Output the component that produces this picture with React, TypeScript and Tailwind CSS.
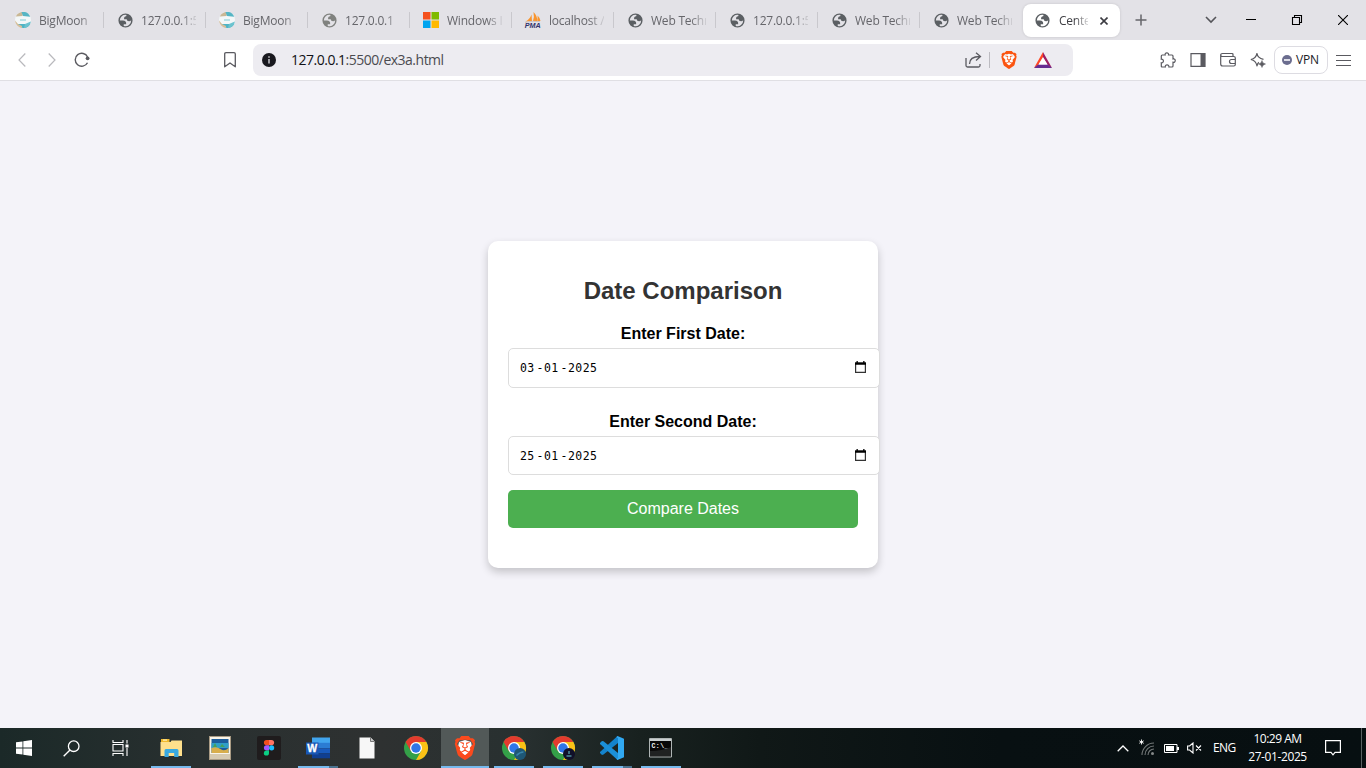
import React from "react";
import { SiBrave } from "react-icons/si";

const Globe = ({ light = false }: { light?: boolean }) => (
  <svg viewBox="0 0 24 24" className={light ? "size-[17px] shrink-0 text-[#80827f]" : "size-[17px] shrink-0 text-[#5b5f63]"}>
    <path
      fill="currentColor"
      fillRule="evenodd"
      d="M12 2a10 10 0 1 1 0 20a10 10 0 0 1 0-20zM4 12h4.4c3.407.022 4.922 1.73 4.543 5.127H9.488v2.47a8.004 8.004 0 0 0 10.498-8.083C19.327 12.504 18.332 13 17 13c-2.137 0-3.206-.916-3.206-2.75h-3.748c-.274-2.728.683-4.092 2.87-4.092 0-.975.327-1.597.811-1.97A8.004 8.004 0 0 0 4 12z"
    />
  </svg>
);

const Moon = () => (
  <svg viewBox="0 0 16 16" className="size-4 shrink-0">
    <circle cx="8" cy="8" r="8" fill="#f3f7f8" />
    <path d="M.8 4.500A8 8 0 0 1 8 0l-.5 4z" fill="#c9b795" />
    <path d="M6.500 0a8 8 0 0 1 8.700 4.700L8 4z" fill="#55b5c4" />
    <path d="M5 8h6" stroke="#7fcbd4" strokeWidth="1" />
    <path d="M2 12h13.200a8 8 0 0 1-7.200 4a8 8 0 0 1-6-4z" fill="#4eb4c5" />
    <path d="M0 8.500l3 3.500 4 2v2A8 8 0 0 1 0 8.500z" fill="#d5bd99" />
    <path d="M10 12l5.900-2.500A8 8 0 0 1 9 16z" fill="#6cc3cf" />
  </svg>
);

const Microsoft = () => (
  <svg viewBox="0 0 16 16" className="size-4 shrink-0">
    <path fill="#f4511e" d="M0 0h7.5v7.5H0z" />
    <path fill="#7fba00" d="M8.5 0H16v7.5H8.5z" />
    <path fill="#00a4ef" d="M0 8.5h7.5V16H0z" />
    <path fill="#ffb900" d="M8.5 8.5H16V16H8.5z" />
  </svg>
);

const Pma = () => (
  <svg viewBox="0 0 16 16" className="size-4 shrink-0 overflow-visible">
    <path d="M.5 9.500Q5 7 6.500 2.500L7 9zM8 9Q9.500 5 8.500 0Q12.500 4 12.300 9zM12.600 9V3.500q2.200 2 2.900 5.500z" fill="#f9952f" />
    <path d="M0 10.300q8-1.800 15-.6" stroke="#c1b9bd" strokeWidth=".8" fill="none" />
    <text x="-.3" y="15.600" fontSize="7" fontWeight="bold" fontStyle="italic" fill="#33336b" textLength="16" lengthAdjust="spacingAndGlyphs" fontFamily="Liberation Sans">PMA</text>
  </svg>
);

const Chrome = ({ children }: { children?: React.ReactNode }) => (
  <svg viewBox="0 0 48 48" className="size-6 overflow-visible">
    <circle cx="24" cy="24" r="24" fill="#34a048" />
    <path d="M24 12h20.8A24 24 0 0 1 24 48l10.4-18z" fill="#fbc116" />
    <path d="M3.2 12A24 24 0 0 1 44.8 12H24L13.6 30z" fill="#e33b2e" />
    <circle cx="24" cy="24" r="12" fill="#fff" />
    <circle cx="24" cy="24" r="9.5" fill="#2f76e8" />
    {children}
  </svg>
);

const Brave = ({ big = false }: { big?: boolean }) => (
  <span className={big ? "grid size-6 place-items-center" : "grid size-[18px] place-items-center"}>
    <svg viewBox="0 0 24 24" className={big ? "col-start-1 row-start-1 size-6" : "col-start-1 row-start-1 size-[18px]"}>
      <path d="M6 6l6-2 6 2 1 5-3 7-4 3-4-3-3-7z" fill="#fff" />
    </svg>
    <SiBrave className={big ? "col-start-1 row-start-1 size-6 text-[#fb4a1d]" : "col-start-1 row-start-1 size-[18px] text-[#fb5410]"} />
  </span>
);

const tabs = [
  { icon: <Moon />, label: "BigMoon" },
  { icon: <Globe />, label: "127.0.0.1:5" },
  { icon: <Moon />, label: "BigMoon" },
  { icon: <Globe light />, label: "127.0.0.1" },
  { icon: <Microsoft />, label: "Windows I" },
  { icon: <Pma />, label: "localhost /" },
  { icon: <Globe />, label: "Web Techn" },
  { icon: <Globe />, label: "127.0.0.1:5" },
  { icon: <Globe />, label: "Web Techn" },
  { icon: <Globe />, label: "Web Techn" },
];

const ui = "font-['Open_Sans','Noto_Sans',sans-serif]";

function TabStrip() {
  return (
    <div className="flex h-10 shrink-0 bg-[#e3e2e7]">
      <div className="flex w-[1022px] shrink-0 items-center pl-0.5">
        {tabs.map((t, i) => (
          <div key={i} className="flex h-[41px] w-[102px] shrink-0 items-center pl-[13px]">
            <span className="grid w-4 shrink-0 place-items-center">{t.icon}</span>
            <span className="mt-[2px] ml-2 w-[55px] overflow-hidden text-[12px] tracking-[-0.22px] whitespace-nowrap text-[#66666b] [mask-image:linear-gradient(to_right,black_72%,transparent_105%)]">
              {t.label}
            </span>
            <span className={i < 9 ? "ml-auto h-4 w-px bg-[#c9c8cd]" : "hidden"} />
          </div>
        ))}
      </div>
      <div className="mt-1 ml-px flex h-[33px] w-[97px] shrink-0 items-center rounded-lg bg-white pl-[11px] shadow-[0_0_3px_#00000022]">
        <Globe />
        <span className="mt-px ml-2 w-[29px] overflow-hidden text-[12px] tracking-[-0.22px] whitespace-nowrap text-[#3f3f44] [mask-image:linear-gradient(to_right,black_55%,transparent_110%)]">
          Cente
        </span>
        <svg viewBox="0 0 8 8" className="ml-[12px] size-2 text-[#3c3c42]">
          <path d="M.5.5l7 7M7.5.5l-7 7" stroke="currentColor" strokeWidth="1.6" />
        </svg>
      </div>
      <div className="flex flex-1 items-center">
        <svg viewBox="0 0 12 12" className="ml-[15px] size-3">
          <path d="M6 .5v11M.5 6h11" stroke="#66666b" strokeWidth="1.5" />
        </svg>
        <svg viewBox="0 0 12 8" className="ml-[58px] h-2 w-3">
          <path d="M1 1l5 5 5-5" stroke="#55555a" strokeWidth="1.6" fill="none" />
        </svg>
        <svg viewBox="0 0 10 10" className="ml-[29px] size-2.5">
          <path d="M0 4.5h10" stroke="#000" />
        </svg>
        <svg viewBox="0 0 10 10" className="ml-9 size-2.5 overflow-visible">
          <path d="M.5 2.5h7v7h-7zM2.5 2.5v-2h7v7h-2" stroke="#000" fill="none" strokeWidth="1.1" />
        </svg>
        <svg viewBox="0 0 10 10" className="ml-9 size-2.5">
          <path d="M0 0l10 10M10 0L0 10" stroke="#000" strokeWidth="1.1" />
        </svg>
      </div>
    </div>
  );
}

function Toolbar() {
  return (
    <div className="flex h-[41px] shrink-0 items-center border-b border-[#e0dfe4] bg-white text-[#5a5a60]">
      <svg viewBox="0 0 8 14" className="ml-[18px] h-3.5 w-2">
        <path d="M7.3.5L1 7l6.3 6.5" stroke="#b9b9bd" strokeWidth="1.2" fill="none" />
      </svg>
      <svg viewBox="0 0 8 14" className="ml-[22px] h-3.5 w-2">
        <path d="M.7.5L7 7L.7 13.500" stroke="#b9b9bd" strokeWidth="1.2" fill="none" />
      </svg>
      <svg viewBox="0 0 16 16" className="ml-[18px] size-4">
        <path d="M13.600 5A6.500 6.500 0 1 0 13.500 10.800" stroke="currentColor" strokeWidth="1.4" fill="none" />
        <circle cx="13.600" cy="6.300" r="1.900" fill="currentColor" />
      </svg>
      <svg viewBox="0 0 12 16" className="ml-[134px] h-4 w-3">
        <path d="M.7 2Q.7.7 2 .7h8Q11.300.7 11.300 2v12.800L6 11 .7 14.800z" stroke="currentColor" strokeWidth="1.3" fill="none" strokeLinejoin="round" />
      </svg>
      <div className="ml-[17px] flex h-8 w-[820px] shrink-0 items-center rounded-lg bg-[#edecf1]">
        <svg viewBox="0 0 14 14" className="ml-[9px] size-3.5">
          <circle cx="7" cy="7" r="7" fill="#19191f" />
          <path d="M7 6v4.500M7 3.200v1.500" stroke="#d5d5d9" strokeWidth="1.400" />
        </svg>
        <span className="ml-[15px] pb-px text-[14px] tracking-[-0.5px] whitespace-nowrap text-[#4b4b50]">
          <span className="text-[#111116]">127.0.0.1</span>:5500/ex3a.html
        </span>
        <svg viewBox="0 0 17 16" className="ml-auto h-4 w-[17px]">
          <path d="M1 6v7.500q0 1.500 1.500 1.500h11q1.500 0 1.500-1.500V12M4.500 12Q4.500 4.500 15 4.500M11 .7L15.500 4.500l-4.500 4" stroke="currentColor" strokeWidth="1.300" fill="none" />
        </svg>
        <span className="ml-[7px] h-4 w-px bg-[#bcbbc1]" />
        <span className="ml-[10px]"><Brave /></span>
        <svg viewBox="0 0 18 16" className="ml-4 h-4 w-[18px]">
          <path d="M9 0L0 16l4-2.500L9 5z" fill="#ff4724" />
          <path d="M9 0l9 16-4-2.500L9 5z" fill="#9e1f63" />
          <path d="M0 16h18l-4.200-3.500H4.200z" fill="#662d91" />
          <path d="M9 5.500l4.500 7h-9z" fill="#fff" />
        </svg>
        <span className="w-[21px]" />
      </div>
      <svg viewBox="0 0 16 16" className="ml-[87px] size-4">
        <path d="M1.300 4Q1.300 3 2.300 3h2.900C4.300.2 9.300.2 8.500 3H12q1 0 1 1v3c3-.8 3 4 0 3.200V14q0 1-1 1H8.900c.5-2.800-4.200-2.800-3.600 0h-3q-1 0-1-1v-3.200c2.800.4 2.800-4 0-3.600z" stroke="currentColor" strokeWidth="1.200" fill="none" />
      </svg>
      <svg viewBox="0 0 16 16" className="ml-[14px] size-4">
        <path d="M1 1.600h14v12.800H1z" stroke="currentColor" strokeWidth="1.200" fill="none" />
        <path d="M10.500 1.500H15v13h-4.500z" fill="currentColor" />
      </svg>
      <svg viewBox="0 0 16 16" className="ml-[14px] size-4">
        <path d="M13 4.500V2.500q0-1-1-1H2.500Q.7 1.500.7 3t1.800 1.500h11.300q1.500 0 1.500 1.500v6.500q0 1.500-1.500 1.500H2.700Q.7 14 .7 12V3M15 7.500h-3.500a2 2 0 0 0 0 4H15" stroke="currentColor" strokeWidth="1.200" fill="none" />
      </svg>
      <svg viewBox="0 0 16 16" className="ml-[14px] size-4">
        <path d="M7 1.200Q7.400 6 13.500 7.300M.8 7.500Q6 6.800 7 1.200M.8 7.500Q6 8.500 7 14Q7.400 11.500 8.800 10.200" stroke="currentColor" strokeWidth="1.200" fill="none" strokeLinejoin="round" />
        <path d="M12 8.500q.3 3 3.500 3.500q-3 .5-3.500 3.500q-.5-3-3.500-3.500q3-.5 3.500-3.500z" fill="currentColor" stroke="currentColor" strokeWidth=".5" />
      </svg>
      <div className="ml-2 flex h-[28px] w-[54px] items-center rounded-lg border border-[#dddce2] pl-[7px]">
        <span className="flex size-2.5 items-center justify-center rounded-full bg-[#6b6d8f]"><span className="h-0.5 w-1.5 bg-[#dddde7]" /></span>
        <span className="ml-1 text-[12px] tracking-[-0.2px] text-[#202026]">VPN</span>
      </div>
      <svg viewBox="0 0 15 13" className="ml-2 h-[13px] w-[15px]">
        <path d="M0 1.500h15M0 6.500h15M0 11.500h15" stroke="currentColor" strokeWidth="1.200" />
      </svg>
    </div>
  );
}

const DateBox = ({ day, tall = false }: { day: string; tall?: boolean }) => (
  <div className={(tall ? "h-10" : "h-[39px]") + " flex w-[372px] items-center rounded-[5px] border border-[#ddd] bg-white pr-[13px] pl-[11px] font-['DejaVu_Sans_Mono',monospace] text-[11.5px] text-black"}>
    <div className="flex pt-[2px]">
      <span className="w-4 tracking-[0.4px]">{day}</span>
      <span className="w-2 text-center">-</span>
      <span className="w-4 tracking-[0.4px]">01</span>
      <span className="w-2 text-center">-</span>
      <span className="tracking-[0.4px]">2025</span>
    </div>
    <svg viewBox="0 0 11 12" className={(tall ? "mb-[2px]" : "mb-px") + " ml-auto h-3 w-[11px]"}>
      <path d="M.6 2h9.800v9.400H.6z" fill="none" stroke="#333" strokeWidth="1.200" />
      <path d="M0 1.500h11v2.200H0zM1.500 0h1.300v2H1.500zM8.200 0h1.300v2H8.200z" fill="#000" />
    </svg>
  </div>
);

function Page() {
  return (
    <main className="flex flex-1 items-center justify-center bg-[#f4f3f9] font-['Liberation_Sans',Arial,sans-serif]">
      <div className="flex h-[327px] w-[390px] flex-col rounded-[10px] bg-white px-5 pt-9 shadow-[0_4px_8px_rgba(0,0,0,0.2)]">
        <h2 className="text-center text-[24px] leading-7 font-bold text-[#333]">Date Comparison</h2>
        <p className="mt-5 mb-[5px] text-center text-[16px] leading-[18px] font-bold text-black">Enter First Date:</p>
        <DateBox day="03" tall />
        <p className="mt-[25px] mb-[5px] text-center text-[16px] leading-[18px] font-bold text-black">Enter Second Date:</p>
        <DateBox day="25" />
        <button className="mt-[15px] h-[38px] rounded-[5px] bg-[#4caf50] pb-px text-[16px] text-white">Compare Dates</button>
      </div>
    </main>
  );
}

const Explorer = () => (
  <svg viewBox="0 0 24 24" className="size-6">
    <path d="M2 3h8.500v3H23v4H2z" fill="#f0b92d" />
    <path d="M4 3.500h4v1.200H4z" fill="#fff4c4" />
    <path d="M1.500 6h10l1-1.500H23V20H1.500z" fill="#ffe08c" />
    <path d="M5.500 21v-6.500q0-1.500 1.500-1.500h11q1.500 0 1.500 1.500V21h-4.300v-4H9.700v4z" fill="#39a9e0" />
  </svg>
);
const Photo = () => (
  <svg viewBox="0 0 22 24" className="h-6 w-[22px]">
    <path d="M0 0h22v24H0z" fill="#a99b84" />
    <path d="M1 1h20v22H1z" fill="#d6cab0" />
    <path d="M1 1h20v17H1z" fill="#f8f4e9" />
    <path d="M2.500 3h17v14h-17z" fill="#1c5d9c" />
    <path d="M2.500 7h17v5h-17z" fill="#2f9fc8" />
    <path d="M2.500 12q5-2 9 1t8-1v5h-17z" fill="#d8ae4b" />
    <path d="M4 11l2-4 2 4zM11 11l2-3 3 3z" fill="#45a05a" />
  </svg>
);
const Figma = () => (
  <svg viewBox="0 0 24 24" className="size-6">
    <rect width="24" height="24" rx="2" fill="#1f1c1d" />
    <path d="M9.500 4H12v5.200H9.500a2.600 2.600 0 0 1 0-5.200z" fill="#f24e1e" />
    <path d="M12 4h2.500a2.600 2.600 0 0 1 0 5.200H12z" fill="#ff7262" />
    <path d="M9.500 9.200H12v5.200H9.500a2.600 2.600 0 0 1 0-5.200z" fill="#a259ff" />
    <circle cx="14.600" cy="11.800" r="2.600" fill="#1abcfe" />
    <path d="M9.500 14.400H12V17a2.600 2.600 0 1 1-2.500-2.600z" fill="#0acf83" />
  </svg>
);
const Word = () => (
  <svg viewBox="0 0 24 24" className="size-6">
    <path d="M6 1.500h18V7H6z" fill="#41a5ee" />
    <path d="M6 6.800h18v5.500H6z" fill="#2b7cd3" />
    <path d="M6 12.300h18v5H6z" fill="#185abd" />
    <path d="M6 17.300h18v5H6z" fill="#103f91" />
    <path d="M0 6.500h12.500v12H0z" fill="#1957b5" />
    <text x="1.200" y="16.200" fontSize="10.500" fontWeight="bold" fill="#fff" stroke="#fff" strokeWidth=".3" fontFamily="Liberation Sans">W</text>
  </svg>
);
const FileIcon = () => (
  <svg viewBox="0 0 16 22" className="h-[22px] w-4">
    <path d="M.5.500h11l4 4v17H.5z" fill="#f7f7f7" />
    <path d="M11.500.500v4h4" fill="#ccc" stroke="#777" />
  </svg>
);
const VsCode = () => (
  <svg viewBox="0 0 24 24" className="size-6">
    <path d="M18 0v7L3.500 18.500 2 19 0 17v-1L17 .5z" fill="#1483cc" />
    <path d="M0 8V7l2-2 1.500.3L18 17v7l-1-.5z" fill="#1b8fd8" />
    <path d="M17.500 0L24 2.700v18.600L17.500 24l-1-1.200L18 22V2l-1.500-.8z" fill="#31a9f2" />
  </svg>
);
const Cmd = () => (
  <svg viewBox="0 0 23 20" className="mr-px h-5 w-[23px]">
    <path d="M.5.500h22v18.500H.5z" fill="#080808" stroke="#aeb4b4" />
    <path d="M1 1h21v2H1z" fill="#c9cfd0" />
    <text x="2.500" y="9.500" fontSize="6.500" fontWeight="bold" fill="#f4f4f4" textLength="17" fontFamily="Liberation Mono">C:\_</text>
    <path d="M1 18V13q12 0 21-4v9z" fill="#202222" />
  </svg>
);

const apps = [
  { icon: <Explorer />, mode: "run" },
  { icon: <Photo />, mode: "" },
  { icon: <Figma />, mode: "" },
  { icon: <Word />, mode: "multi" },
  { icon: <FileIcon />, mode: "" },
  { icon: <Chrome />, mode: "" },
  { icon: <Brave big />, mode: "active" },
  { icon: <Chrome><circle cx="36" cy="36" r="12" fill="#1e5776" /><path d="M29 39q7-7 14-7" stroke="#3985ac" strokeWidth="3" fill="none" /></Chrome>, mode: "run" },
  { icon: <Chrome><circle cx="36" cy="36" r="12" fill="#111029" /><path d="M36 30v6M31 40h10" stroke="#4b8d9b" strokeWidth="3" /></Chrome>, mode: "run" },
  { icon: <VsCode />, mode: "multi" },
  { icon: <Cmd />, mode: "run" },
];

function Taskbar() {
  return (
    <div className="flex h-10 shrink-0 bg-[linear-gradient(90deg,#1b2928_0,#293030_200px,#2e3131_380px,#283030_520px,#18211f_640px,#101817_760px,#081012_1000px,#070f11_100%)] text-white">
      <div className="flex w-12 items-center justify-center">
        <svg viewBox="0 0 16 16" className="size-4">
          <path d="M0 2.300l6.500-.9v6.100H0zM7.300 1.300L16 0v7.500H7.300zM0 8.400h6.500v6.200L0 13.700zM7.300 8.400H16V16l-8.700-1.300z" fill="#fff" />
        </svg>
      </div>
      <div className="flex w-12 items-center justify-center pr-px">
        <svg viewBox="0 0 17 17" className="size-[17px]">
          <circle cx="10.700" cy="6.200" r="5.300" stroke="#fff" strokeWidth="1.300" fill="none" />
          <path d="M7 10L.7 16.300" stroke="#fff" strokeWidth="1.400" />
        </svg>
      </div>
      <div className="flex w-12 items-center justify-center">
        <svg viewBox="0 0 17 16" className="h-4 w-[17px]">
          <path d="M1 0v2.500h10V0M1 16v-2.500h10V16M1 4.500h10v6.500H1zM15 0v3.500M15 8v8" stroke="#fff" strokeWidth="1.100" fill="none" />
          <path d="M13.500 4.500h3v3h-3z" fill="#fff" />
        </svg>
      </div>
      <div className="ml-[3px] flex gap-px">
        {apps.map((a, i) => (
          <div key={i} className={(a.mode === "active" ? "bg-[#525958]" : "") + " flex w-12 flex-col items-center"}>
            <div className="flex h-[38px] items-center pt-0.5">{a.icon}</div>
            <div className={a.mode === "active" ? "h-0.5 w-12 bg-[#76b9ed]" : a.mode === "multi" ? "h-0.5 w-10 bg-[linear-gradient(90deg,#76b9ed_31px,#4b7390_31px)]" : a.mode === "run" ? "h-0.5 w-10 bg-[#76b9ed]" : "h-0.5 w-10"} />
          </div>
        ))}
      </div>
      <div className="ml-auto flex items-center text-[12px]">
        <svg viewBox="0 0 12 7" className="h-[7px] w-3">
          <path d="M.7 6.300L6 1l5.300 5.300" stroke="#fff" strokeWidth="1.300" fill="none" />
        </svg>
        <svg viewBox="0 0 16 16" className="ml-2.5 size-4 overflow-visible">
          <path d="M2.500-.5v5M.3.800l4.400 2.500M4.700.800L.3 3.300" stroke="#fff" strokeWidth=".9" />
          <path d="M3 15A12 12 0 0 1 15 3M6 15a9 9 0 0 1 9-9M9 15a6 6 0 0 1 6-6" stroke="#737878" strokeWidth="1.100" fill="none" />
          <circle cx="13.500" cy="13.500" r="1.500" fill="#858989" />
        </svg>
        <svg viewBox="0 0 15 9" className="ml-[9px] h-[9px] w-[15px]">
          <path d="M.5.500h12.500v8H.5z" stroke="#fff" fill="none" />
          <path d="M2 2h8v5H2zM13 3h2v3h-2z" fill="#fff" />
        </svg>
        <svg viewBox="0 0 15 12" className="ml-2 h-3 w-[15px]">
          <path d="M.6 4h2L6 1v10L2.600 8h-2zM9 3.500l5 5M14 3.500l-5 5" stroke="#fff" strokeWidth="1.100" fill="none" />
        </svg>
        <span className="ml-[11px] w-6 tracking-[-0.55px]">ENG</span>
        <div className="ml-[11px] w-[59px] text-center leading-[18px] whitespace-nowrap">
          <div className="tracking-[-0.5px]">10:29 AM</div>
          <div className="tracking-[-0.4px]">27-01-2025</div>
        </div>
        <svg viewBox="0 0 16 16" className="ml-[18px] size-4">
          <path d="M.6.600h14.800v11.800H10L8 14.800l-2-2.400H.6z" stroke="#fff" strokeWidth="1.200" fill="none" />
        </svg>
        <span className="ml-5 h-10 w-px bg-[#596162]" />
        <span className="w-1" />
      </div>
    </div>
  );
}

export default function App() {
  return (
    <div className={"flex h-[768px] w-[1366px] flex-col overflow-hidden " + ui}>
      <TabStrip />
      <Toolbar />
      <Page />
      <Taskbar />
    </div>
  );
}
